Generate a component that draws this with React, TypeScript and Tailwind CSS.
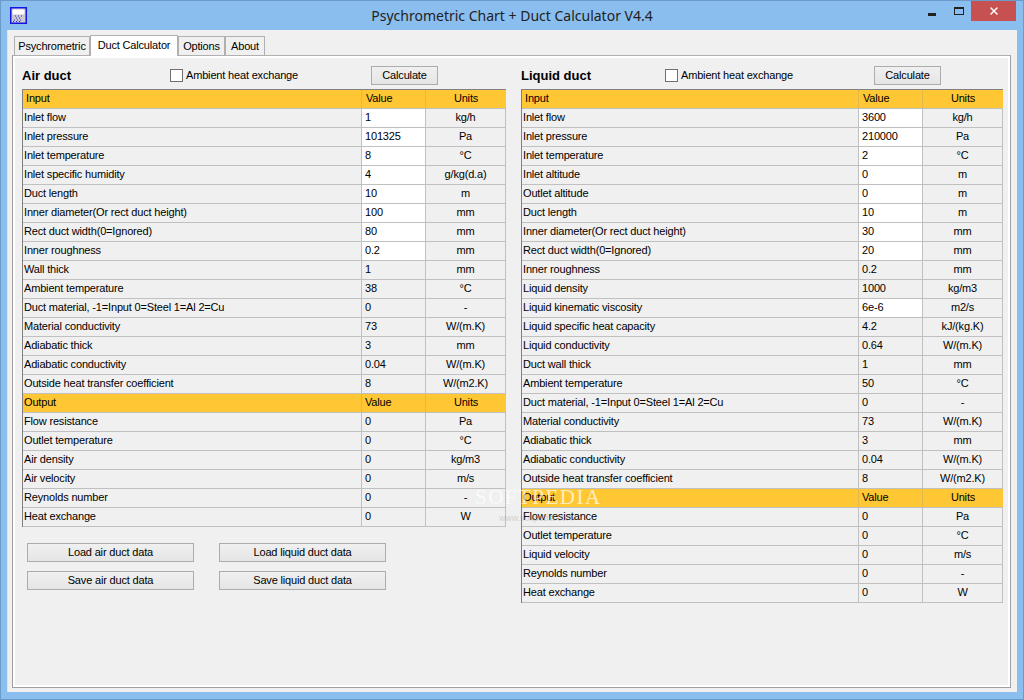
import { X } from "lucide-react";

type Row = { label: string; value: string; units: string; input?: boolean; head?: boolean };

const h = (label: string): Row => ({ label, value: "Value", units: "Units", head: true });

const airRows: Row[] = [
  h("Input"),
  { label: "Inlet flow", value: "1", units: "kg/h", input: true },
  { label: "Inlet pressure", value: "101325", units: "Pa", input: true },
  { label: "Inlet temperature", value: "8", units: "°C", input: true },
  { label: "Inlet specific humidity", value: "4", units: "g/kg(d.a)", input: true },
  { label: "Duct length", value: "10", units: "m", input: true },
  { label: "Inner diameter(Or rect duct height)", value: "100", units: "mm", input: true },
  { label: "Rect duct width(0=Ignored)", value: "80", units: "mm", input: true },
  { label: "Inner roughness", value: "0.2", units: "mm", input: true },
  { label: "Wall thick", value: "1", units: "mm" },
  { label: "Ambient temperature", value: "38", units: "°C" },
  { label: "Duct material, -1=Input 0=Steel 1=Al 2=Cu", value: "0", units: "-" },
  { label: "Material conductivity", value: "73", units: "W/(m.K)" },
  { label: "Adiabatic thick", value: "3", units: "mm" },
  { label: "Adiabatic conductivity", value: "0.04", units: "W/(m.K)" },
  { label: "Outside heat transfer coefficient", value: "8", units: "W/(m2.K)" },
  h("Output"),
  { label: "Flow resistance", value: "0", units: "Pa" },
  { label: "Outlet temperature", value: "0", units: "°C" },
  { label: "Air density", value: "0", units: "kg/m3" },
  { label: "Air velocity", value: "0", units: "m/s" },
  { label: "Reynolds number", value: "0", units: "-" },
  { label: "Heat exchange", value: "0", units: "W" },
];

const liquidRows: Row[] = [
  h("Input"),
  { label: "Inlet flow", value: "3600", units: "kg/h", input: true },
  { label: "Inlet pressure", value: "210000", units: "Pa", input: true },
  { label: "Inlet temperature", value: "2", units: "°C", input: true },
  { label: "Inlet altitude", value: "0", units: "m", input: true },
  { label: "Outlet altitude", value: "0", units: "m", input: true },
  { label: "Duct length", value: "10", units: "m", input: true },
  { label: "Inner diameter(Or rect duct height)", value: "30", units: "mm", input: true },
  { label: "Rect duct width(0=Ignored)", value: "20", units: "mm", input: true },
  { label: "Inner roughness", value: "0.2", units: "mm" },
  { label: "Liquid density", value: "1000", units: "kg/m3" },
  { label: "Liquid kinematic viscosity", value: "6e-6", units: "m2/s", input: true },
  { label: "Liquid specific heat capacity", value: "4.2", units: "kJ/(kg.K)" },
  { label: "Liquid conductivity", value: "0.64", units: "W/(m.K)" },
  { label: "Duct wall thick", value: "1", units: "mm" },
  { label: "Ambient temperature", value: "50", units: "°C" },
  { label: "Duct material, -1=Input 0=Steel 1=Al 2=Cu", value: "0", units: "-" },
  { label: "Material conductivity", value: "73", units: "W/(m.K)" },
  { label: "Adiabatic thick", value: "3", units: "mm" },
  { label: "Adiabatic conductivity", value: "0.04", units: "W/(m.K)" },
  { label: "Outside heat transfer coefficient", value: "8", units: "W/(m2.K)" },
  h("Output"),
  { label: "Flow resistance", value: "0", units: "Pa" },
  { label: "Outlet temperature", value: "0", units: "°C" },
  { label: "Liquid velocity", value: "0", units: "m/s" },
  { label: "Reynolds number", value: "0", units: "-" },
  { label: "Heat exchange", value: "0", units: "W" },
];

const WinButton = ({ label, className }: { label: string; className: string }) => (
  <button className={`h-[19px] border border-[#acacac] bg-gradient-to-b from-[#f0f0f0] to-[#e5e5e5] text-black leading-none ${className}`}>
    {label}
  </button>
);

const Grid = ({ rows, cols }: { rows: Row[]; cols: string }) => (
  <div className="border-t border-l border-[#808080]">
    {rows.map((r, i) => {
      const isInputHead = r.head && r.label === "Input";
      return (
        <div
          key={i}
          className={`grid h-[19px] border-b border-[#c0c0c0] ${cols} ${r.head ? "bg-[#ffc733]" : ""}`}
        >
          <div className={`truncate leading-[17px] ${isInputHead ? "pl-[3px]" : "pl-[1px]"} ${r.head ? "border-r border-[#e3b84a]" : "border-r border-[#c0c0c0]"}`}>
            {r.label}
          </div>
          <div className={`leading-[17px] ${isInputHead ? "pl-[4px]" : "pl-[3px]"} ${r.head ? "border-r border-[#e3b84a]" : "border-r border-[#c0c0c0]"} ${r.input ? "bg-white" : ""}`}>
            {r.value}
          </div>
          <div className={`text-center leading-[17px] ${r.head ? "" : "border-r border-[#c0c0c0]"}`}>{r.units}</div>
        </div>
      );
    })}
  </div>
);

const Heading = ({ title, titleClass, checkClass }: { title: string; titleClass: string; checkClass: string }) => (
  <div className="flex items-center h-[19px] mb-[4px]">
    <span className={`font-bold text-[13px] tracking-normal ${titleClass}`}>{title}</span>
    <span className={`flex items-center gap-[3px] ${checkClass}`}>
      <span className="w-[13px] h-[13px] border border-[#707070] bg-white" />
      Ambient heat exchange
    </span>
    <WinButton label="Calculate" className="w-[67px]" />
  </div>
);

const tabs = [
  { label: "Psychrometric", w: "w-[76px]" },
  { label: "Duct Calculator", w: "w-[88px]", active: true },
  { label: "Options", w: "w-[47px]" },
  { label: "About", w: "w-[40px]" },
];

export default function App() {
  return (
    <div
      className="relative w-[1024px] h-[700px] overflow-hidden bg-[#8abeee] border border-[#6b9cc9] flex flex-col text-black text-[11px] tracking-[-0.17px]"
      style={{ fontFamily: '"Liberation Sans", Arial, sans-serif' }}
    >
      {/* title bar */}
      <div className="flex items-center h-[29px] shrink-0 pl-[9px]">
        <svg width="17" height="17" viewBox="0 0 17 17" className="shrink-0 mb-[1px]">
          <rect x="0.75" y="0.75" width="15.5" height="15.5" fill="#c9c9cf" stroke="#1414e6" strokeWidth="1.5" />
          <rect x="2.5" y="2.5" width="12" height="5" rx="1.5" fill="#fff" />
          <path d="M5 9h1M8 9h1M11 9h1M6 11h1M9 11h1M4 13h1M7 13h1M10 13h1" stroke="#2a2ac8" strokeWidth="1.2" />
          <path d="M3 14.5h1M6 14.5h1M9 14.5h1" stroke="#2a2ac8" strokeWidth="1" />
        </svg>
        <div className="flex-1 text-center text-[14px] tracking-normal text-[#222] pl-[69px]" style={{ fontFamily: '"Noto Sans", sans-serif' }}>
          Psychrometric Chart + Duct Calculator V4.4
        </div>
        <div className="flex items-center shrink-0 mb-[9px]">
          <span className="w-[8px] h-[3px] bg-[#222] mt-[6px] mr-[18px]" />
          <span className="w-[10px] h-[8px] border border-[#222] border-t-2 mr-[7px]" />
          <span className="w-[45px] h-[20px] bg-[#c75050] flex items-center justify-center mr-[7px]">
            <X size={12} color="#fff" strokeWidth={3} />
          </span>
        </div>
      </div>

      {/* client area */}
      <div className="flex-1 mx-[6px] mb-[7px] bg-[#f0f0f0] border-l border-[#d8e6f2] pl-[4px] pr-[6px] pt-[4px] pb-[4px] flex flex-col min-h-0">
        <div className="flex items-end h-[21px] pl-[2px] relative z-10 shrink-0">
          {tabs.map((t) =>
            t.active ? (
              <div key={t.label} className={`${t.w} h-[21px] -mb-[1px] bg-white border border-b-0 border-[#b0b0b0] text-center leading-[19px] relative`}>
                {t.label}
              </div>
            ) : (
              <div key={t.label} className={`${t.w} h-[19px] border border-b-0 border-[#b0b0b0] bg-[#f0f0f0] text-center leading-[19px]`}>
                {t.label}
              </div>
            ),
          )}
        </div>
        <div className="flex-1 min-h-0 border border-[#a0a0a0] border-t-[#b0b0b0]">
          <div className="h-full border-[2px] border-white bg-[#f0f0f0] pt-[8px] pl-[7px] pr-[4px] flex gap-[15px]">
            <div className="w-[484px]">
              <Heading title="Air duct" titleClass="w-[148px]" checkClass="w-[201px]" />
              <Grid rows={airRows} cols="grid-cols-[339px_64px_80px]" />
              <div className="grid grid-cols-[167px_167px] gap-x-[25px] gap-y-[9px] mt-[16px] ml-[5px]">
                <WinButton label="Load air duct data" className="w-[167px]" />
                <WinButton label="Load liquid duct data" className="w-[167px]" />
                <WinButton label="Save air duct data" className="w-[167px]" />
                <WinButton label="Save liquid duct data" className="w-[167px]" />
              </div>
            </div>
            <div className="w-[482px]">
              <Heading title="Liquid duct" titleClass="w-[144px]" checkClass="w-[209px]" />
              <Grid rows={liquidRows} cols="grid-cols-[337px_64px_80px]" />
            </div>
          </div>
        </div>
      </div>

      {/* softpedia watermark */}
      <div className="absolute left-[474px] top-[481px] text-[21px] tracking-[1.5px] text-white/70 pointer-events-none" style={{ fontFamily: '"Liberation Serif", serif' }}>
        SOFTPEDIA
      </div>
      <div className="absolute left-[498px] top-[511px] text-[9px] text-[#999]/40 pointer-events-none">www.softpedia.com</div>
    </div>
  );
}
